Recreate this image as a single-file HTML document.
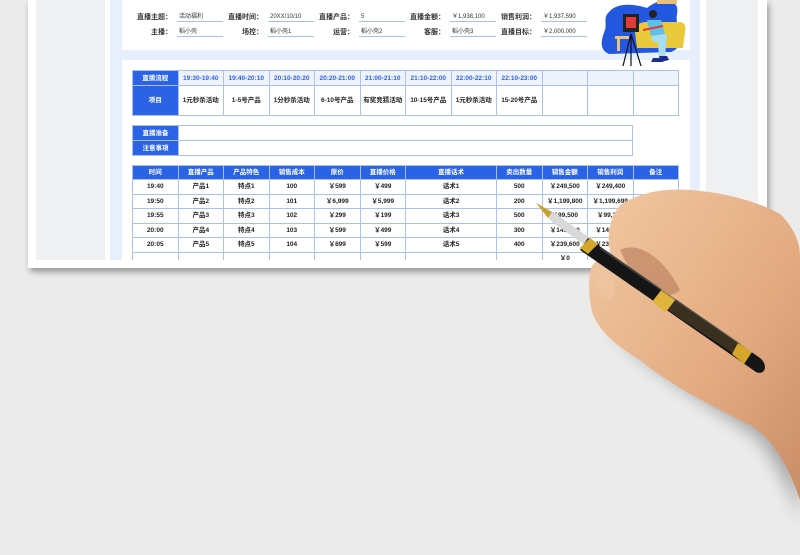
<!DOCTYPE html>
<html><head><meta charset="utf-8"><style>
*{margin:0;padding:0;box-sizing:border-box}
body{width:800px;height:555px;background:#ebebeb;position:relative;overflow:hidden;font-family:"Liberation Sans","Noto Sans CJK SC",sans-serif;font-weight:bold;color:#222}
.a{position:absolute}
.lbl{position:absolute;font-size:7px;color:#333;text-align:right;width:60px;line-height:9px}
.val{position:absolute;font-size:6px;color:#333;border-bottom:1px solid #a8bff2;height:9px;width:46px;padding-left:2px;font-weight:normal;line-height:8px}
table{border-collapse:collapse;position:absolute;table-layout:fixed}
td{border:1px solid #a9c0f5;font-size:6.5px;line-height:7px;text-align:center;vertical-align:middle;padding:0;white-space:nowrap;overflow:hidden}
.h{background:#2b63e6;color:#fff}
.t{color:#2b63e6;background:#eef3fd}
</style></head><body>
<div class="a" style="left:28px;top:0;width:739px;height:268px;background:#fff;box-shadow:2px 4px 6px rgba(0,0,0,.35)"></div>
<div class="a" style="left:36px;top:0;width:69px;height:260px;background:#eff0f2"></div>
<div class="a" style="left:706px;top:0;width:52px;height:260px;background:#eff0f2"></div>
<div class="a" style="left:110px;top:0;width:590px;height:260px;background:#e8effc"></div>
<div class="a" style="left:122px;top:0;width:568px;height:50px;background:#fff"></div>
<div class="a" style="left:122px;top:60px;width:568px;height:200px;background:#fff"></div>

<div class="lbl" style="left:112px;top:13px">直播主题：</div><div class="val" style="left:177px;top:13px">活动福利</div>
<div class="lbl" style="left:112px;top:28px">主播：</div><div class="val" style="left:177px;top:28px">稻小壳</div>
<div class="lbl" style="left:203px;top:13px">直播时间：</div><div class="val" style="left:268px;top:13px">20XX/10/10</div>
<div class="lbl" style="left:203px;top:28px">场控：</div><div class="val" style="left:268px;top:28px">稻小壳1</div>
<div class="lbl" style="left:294px;top:13px">直播产品：</div><div class="val" style="left:359px;top:13px">5</div>
<div class="lbl" style="left:294px;top:28px">运营：</div><div class="val" style="left:359px;top:28px">稻小壳2</div>
<div class="lbl" style="left:385px;top:13px">直播金额：</div><div class="val" style="left:450px;top:13px">￥1,938,100</div>
<div class="lbl" style="left:385px;top:28px">客服：</div><div class="val" style="left:450px;top:28px">稻小壳3</div>
<div class="lbl" style="left:476px;top:13px">销售利润：</div><div class="val" style="left:541px;top:13px">￥1,937,590</div>
<div class="lbl" style="left:476px;top:28px">直播目标：</div><div class="val" style="left:541px;top:28px">￥2,000,000</div>

<svg class="a" style="left:595px;top:0" width="100" height="70" viewBox="0 0 100 70">
<path d="M14 12 C22 2 40 4 52 8 C62 0 74 -2 80 4 C86 10 78 18 84 26 C92 36 86 48 76 52 L14 54 C4 50 6 40 10 30 C12 22 8 18 14 12Z" fill="#2457e0"/>
<rect x="62" y="0" width="20" height="4" fill="#e8c27a"/>
<path d="M40 32 Q40 22 52 22 L84 22 Q92 22 90 32 L88 48 L42 48Z" fill="#e9c93a"/>
<rect x="20" y="36" width="14" height="3" fill="#e8c27a"/>
<rect x="22" y="39" width="3" height="12" fill="#e8c27a"/>
<rect x="28" y="14" width="16" height="18" fill="#222"/><rect x="31" y="17" width="10" height="11" fill="#e23a3a"/>
<path d="M36 34 L28 66 M36 34 L36 66 M36 34 L46 66" stroke="#111" stroke-width="1.2"/>
<circle cx="58" cy="14" r="4" fill="#222"/>
<path d="M52 20 L66 20 L70 34 L56 36Z" fill="#5ec0e8"/>
<path d="M56 36 L72 34 L70 58 L64 58 L63 42 L58 42Z" fill="#a8dcf0"/>
<path d="M58 58 L68 58 L68 62 L56 62Z M64 56 L72 56 L74 60 L66 62Z" fill="#1a2d8a"/>
<path d="M68 26 L48 30" stroke="#e23a3a" stroke-width="2"/>
</svg>

<table style="left:132px;top:70px;width:546px">
<colgroup><col span="12" style="width:45.5px"></colgroup>
<tr style="height:15px"><td class="h">直播流程</td><td class="t">19:30-19:40</td><td class="t">19:40-20:10</td><td class="t">20:10-20:20</td><td class="t">20:20-21:00</td><td class="t">21:00-21:10</td><td class="t">21:10-22:00</td><td class="t">22:00-22:10</td><td class="t">22:10-23:00</td><td class="t"></td><td class="t"></td><td class="t"></td></tr>
<tr style="height:30px"><td class="h">项目</td><td>1元秒杀活动</td><td>1-5号产品</td><td>1分秒杀活动</td><td>6-10号产品</td><td>有奖竞猜活动</td><td>10-15号产品</td><td>1元秒杀活动</td><td>15-20号产品</td><td></td><td></td><td></td></tr>
</table>

<table style="left:132px;top:125px;width:501px">
<colgroup><col style="width:46px"><col></colgroup>
<tr style="height:15px"><td class="h">直播准备</td><td></td></tr>
<tr style="height:15px"><td class="h">注意事项</td><td></td></tr>
</table>

<table style="left:132px;top:165px;width:546px">
<colgroup><col style="width:45.5px"><col style="width:45.5px"><col style="width:45.5px"><col style="width:45.5px"><col style="width:45.5px"><col style="width:45.5px"><col style="width:91px"><col style="width:45.5px"><col style="width:45.5px"><col style="width:45.5px"><col style="width:45.5px"></colgroup>
<tr style="height:14px"><td class="h">时间</td><td class="h">直播产品</td><td class="h">产品特色</td><td class="h">销售成本</td><td class="h">原价</td><td class="h">直播价格</td><td class="h">直播话术</td><td class="h">卖出数量</td><td class="h">销售金额</td><td class="h">销售利润</td><td class="h">备注</td></tr>
<tr style="height:14.5px"><td>19:40</td><td>产品1</td><td>特点1</td><td>100</td><td>￥599</td><td>￥499</td><td>话术1</td><td>500</td><td>￥249,500</td><td>￥249,400</td><td></td></tr>
<tr style="height:14.5px"><td>19:50</td><td>产品2</td><td>特点2</td><td>101</td><td>￥6,999</td><td>￥5,999</td><td>话术2</td><td>200</td><td>￥1,199,800</td><td>￥1,199,699</td><td></td></tr>
<tr style="height:14.5px"><td>19:55</td><td>产品3</td><td>特点3</td><td>102</td><td>￥299</td><td>￥199</td><td>话术3</td><td>500</td><td>￥99,500</td><td>￥99,398</td><td></td></tr>
<tr style="height:14.5px"><td>20:00</td><td>产品4</td><td>特点4</td><td>103</td><td>￥599</td><td>￥499</td><td>话术4</td><td>300</td><td>￥149,700</td><td>￥149,597</td><td></td></tr>
<tr style="height:14.5px"><td>20:05</td><td>产品5</td><td>特点5</td><td>104</td><td>￥699</td><td>￥599</td><td>话术5</td><td>400</td><td>￥239,600</td><td>￥239,496</td><td></td></tr>
<tr style="height:12px"><td></td><td></td><td></td><td></td><td></td><td></td><td></td><td></td><td>￥0</td><td></td><td></td></tr>
</table>
<div class="a" style="left:28px;top:260px;width:739px;height:8px;background:#fff"></div>

<svg class="a" style="left:0;top:0" width="800" height="555" viewBox="0 0 800 555">
<defs>
<linearGradient id="sk" x1="0" y1="0" x2="1" y2="1"><stop offset="0" stop-color="#f2c9a3"/><stop offset="0.6" stop-color="#e3aa80"/><stop offset="1" stop-color="#c98d68"/></linearGradient>
<filter id="bl"><feGaussianBlur stdDeviation="8"/></filter>
</defs>
<path d="M610 330 C660 380 720 410 760 440 C780 470 795 500 800 520 L800 420 Z" fill="#555" opacity="0.45" filter="url(#bl)"/>
<path d="M620 205 C640 192 665 188 690 190 C720 192 755 200 780 214 C795 228 800 245 800 255 L800 500 C790 470 775 440 750 425 C710 405 670 385 640 360 C615 345 598 330 592 312 C588 295 588 275 592 266 C598 258 606 256 612 258 C606 240 608 220 620 205Z" fill="url(#sk)"/>
<path d="M620 250 C640 240 665 260 680 290 C670 300 650 295 635 280Z" fill="#b7795a" opacity="0.6"/>
<path d="M592 268 C600 262 612 262 616 270 L612 300 C602 300 594 290 592 268Z" fill="#edc3a0"/>
<path d="M536 203 L556 214 L590 238 L586 246 L552 222 Z" fill="#d9d9d9"/>
<path d="M536 203 L552 212 L548 218 Z" fill="#c9a030"/>
<path d="M588 238 L760 358 C768 364 766 376 756 372 L580 250 Z" fill="#151515"/>
<path d="M590 238 L598 244 L588 254 L580 248Z" fill="#d4a62a"/>
<path d="M662 289 L676 299 L666 312 L652 302Z" fill="#e0b43a"/>
<path d="M676 300 L740 345 L734 354 L668 310Z" fill="#3a3020"/>
<path d="M738 343 L752 352 L744 364 L732 354Z" fill="#d4a62a"/>
<path d="M600 248 L740 344" stroke="#666" stroke-width="1.5" opacity="0.6"/>
</svg>
</body></html>
